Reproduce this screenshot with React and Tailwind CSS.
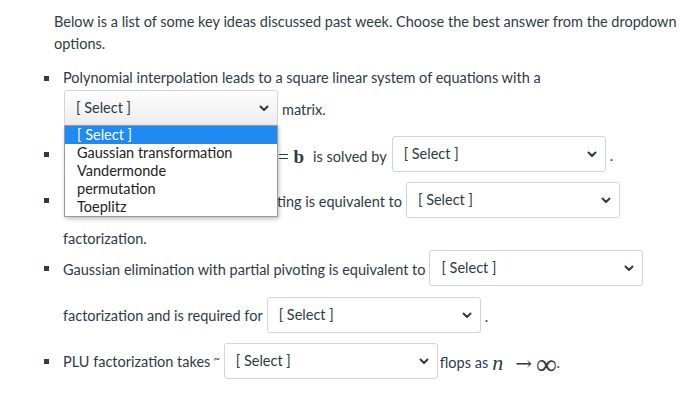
import React from 'react';

const OPTIONS = ['[ Select ]', 'Gaussian transformation', 'Vandermonde', 'permutation', 'Toeplitz'];

function Chevron() {
  return (
    <svg width="10" height="7" viewBox="0 0 10 7" className="shrink-0">
      <path d="M1.5 1.5 L5 5 L8.5 1.5" fill="none" stroke="#2d3b45" strokeWidth="2" strokeLinecap="round" strokeLinejoin="round" />
    </svg>
  );
}

function Select({ open = false, className = '' }) {
  return (
    <div className={`relative shrink-0 ${className}`}>
      <div
        className={`flex h-[36px] w-[214px] items-center justify-between rounded-[3px] border border-[#d0d5d9] pl-[11px] pr-[8px] ${
          open ? 'bg-gradient-to-b from-white to-[#ececec]' : 'bg-white'
        }`}
      >
        <span>[ Select ]</span>
        <Chevron />
      </div>
      {open && (
        <div className="absolute left-0 top-[35px] z-10 w-[214px] border border-[#9a9a9a] bg-white shadow-[1px_2px_4px_rgba(0,0,0,0.25)]">
          {OPTIONS.map((opt, i) => (
            <div
              key={opt}
              className={`h-[18px] pl-[12px] leading-[18px] ${i === 0 ? 'bg-[#1f8af2] text-white' : 'text-[#222]'}`}
            >
              {opt}
            </div>
          ))}
        </div>
      )}
    </div>
  );
}

function Bullet({ children, className = '' }) {
  return (
    <div className={`flex items-center whitespace-nowrap ${className}`}>
      <span className="ml-[4px] mr-[14px] h-[5px] w-[5px] shrink-0 bg-[#2d3b45]" />
      {children}
    </div>
  );
}

const math = { fontFamily: '"Liberation Serif", "DejaVu Serif", serif' };

export default function App() {
  return (
    <div
      className="h-[416px] w-[700px] overflow-hidden bg-white pl-[40px] pt-[11px] text-[14.5px] text-[#2d3b45]"
      style={{ fontFamily: 'Lato, "Liberation Sans", sans-serif' }}
    >
      <p className="pl-[14px] leading-[22px]">
        Below is a list of some key ideas discussed past week. Choose the best answer from the dropdown options.
      </p>

      <div className="mt-[12px]">
        <Bullet className="h-[22px]">
          <span>Polynomial interpolation leads to a square linear system of equations with a</span>
        </Bullet>

        <div className="relative z-10 mt-[1px] flex h-[36px] items-center pl-[24px]">
          <Select open />
          <span className="ml-[4px] translate-y-[2px]">matrix.</span>
        </div>

        <Bullet className="mt-[10px] h-[36px]">
          <span className="inline-block w-[215px] shrink-0" />
          <span className="translate-y-[2px] text-[19px] leading-none" style={math}>
            = <b>b</b>
          </span>
          <span className="ml-[9px] translate-y-[3px]">is solved by</span>
          <Select className="ml-[5px]" />
          <span className="ml-[4px] translate-y-[2px]">.</span>
        </Bullet>

        <Bullet className="mt-[10px] h-[36px]">
          <span className="inline-block w-[214px] shrink-0" />
          <span className="translate-y-[2px]">ting is equivalent to</span>
          <Select className="ml-[4px]" />
        </Bullet>

        <div className="mt-[10px] h-[22px] pl-[23px] leading-[22px]">factorization.</div>

        <Bullet className="h-[36px]">
          <span className="translate-y-[2px]">Gaussian elimination with partial pivoting is equivalent to</span>
          <Select className="ml-[4px]" />
        </Bullet>

        <div className="mt-[11px] flex h-[36px] items-center pl-[23px]">
          <span className="translate-y-[1px]">factorization and is required for</span>
          <Select className="ml-[4px]" />
          <span className="ml-[4px] translate-y-[2px]">.</span>
        </div>

        <Bullet className="mt-[10px] h-[36px]">
          <span className="translate-y-[1px]">PLU factorization takes</span>
          <span className="ml-[3px] -translate-y-[2px] text-[11px]">~</span>
          <Select className="ml-[4px]" />
          <span className="ml-[2px] translate-y-[2px]">flops as</span>
          <span className="ml-[4px] translate-y-[2px] text-[22px] italic leading-none" style={math}>
            n
          </span>
          <span className="ml-[12px] translate-y-[2px] text-[20px] leading-none" style={{ fontFamily: '"DejaVu Serif", serif' }}>
            →
          </span>
          <span className="ml-[4px] translate-y-[3px] text-[29px] leading-none" style={math}>
            ∞
          </span>
          <span className="translate-y-[2px]">.</span>
        </Bullet>
      </div>
    </div>
  );
}
